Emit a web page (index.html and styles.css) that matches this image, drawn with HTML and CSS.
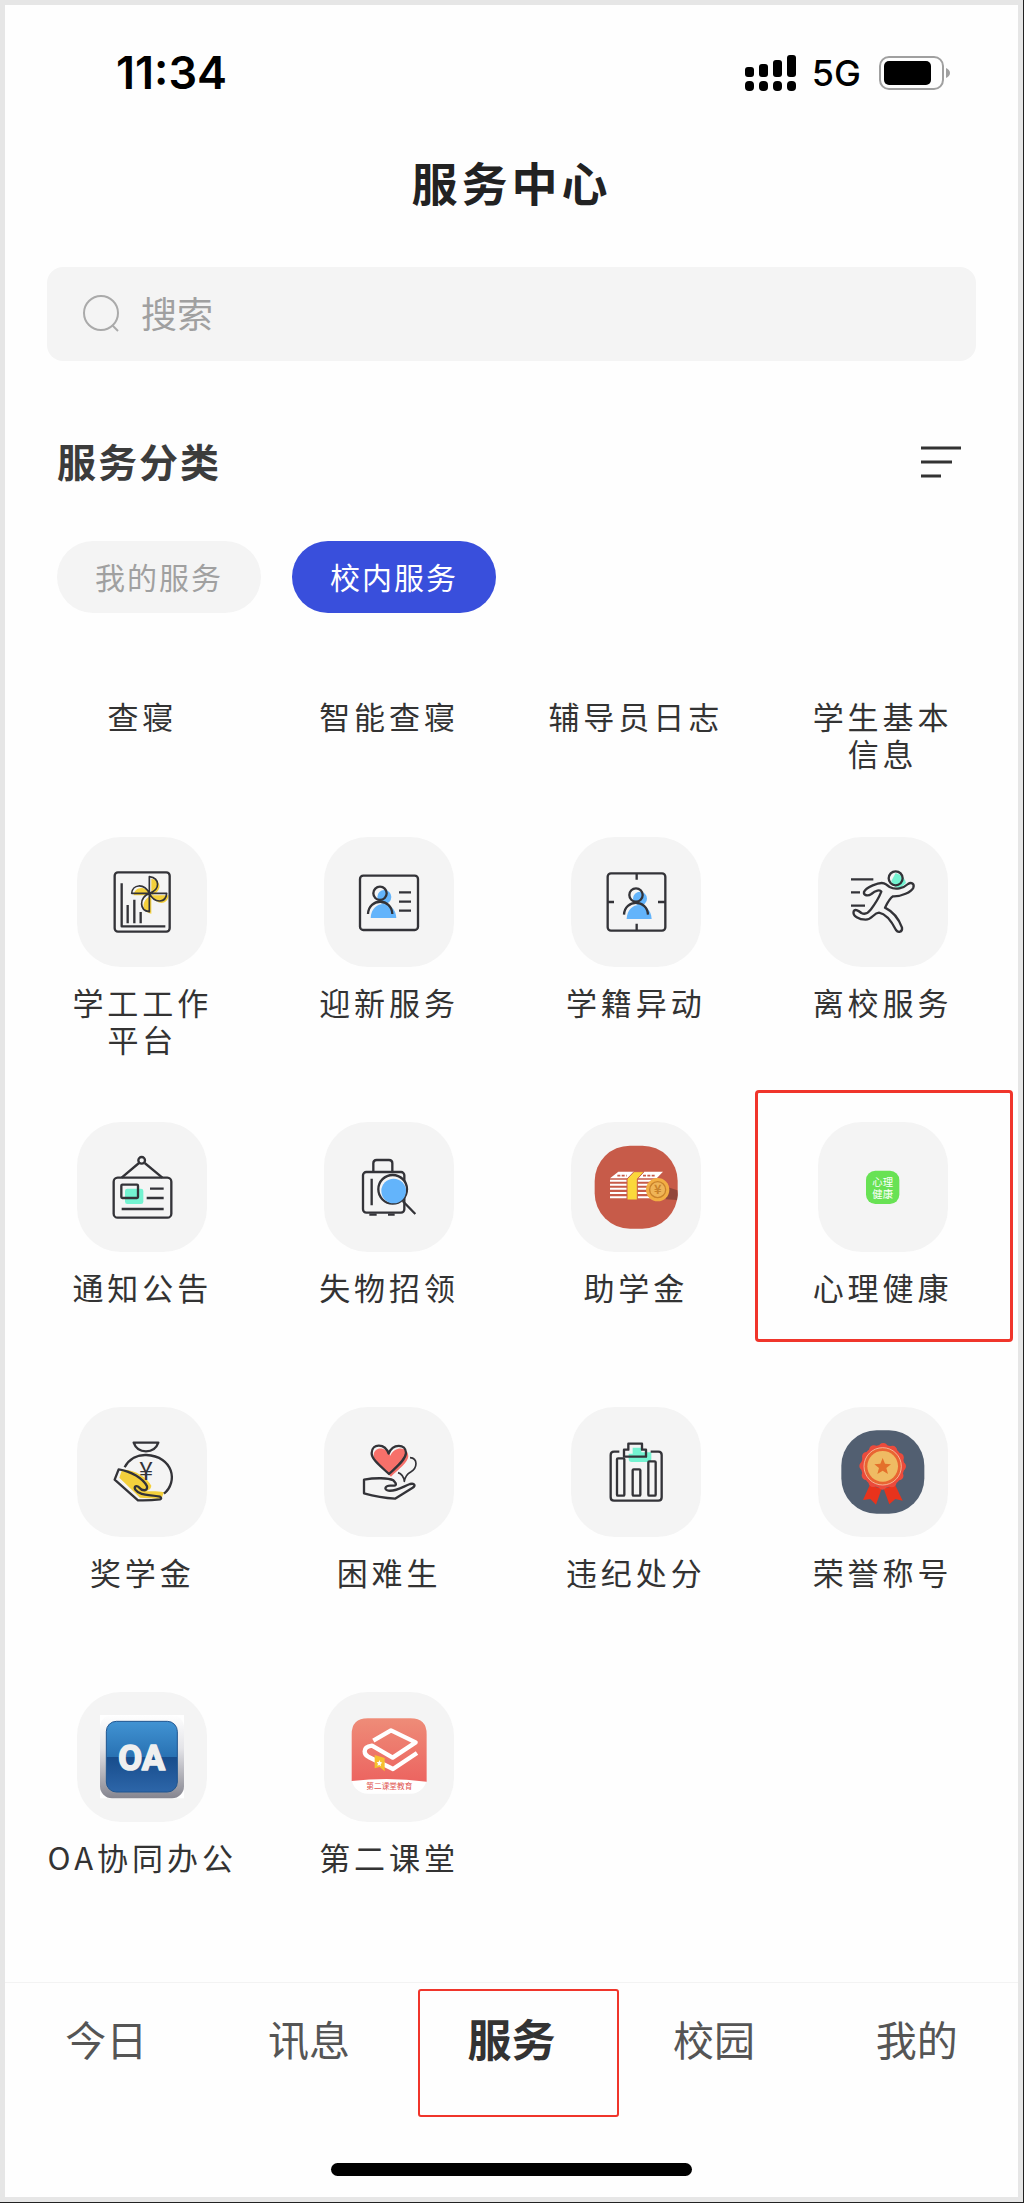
FILE: index.html
```html
<!DOCTYPE html>
<html lang="zh-CN">
<head>
  <meta charset="UTF-8">
  <meta name="viewport" content="width=device-width, initial-scale=1.0">
  <title>服务中心</title>
  <link rel="stylesheet" href="styles.css">
</head>
<body>
  <div class="screen">
    <div class="status-bar">
      <span class="time">11:34</span>
      <div class="status-icons">
        <svg class="signal" viewBox="0 0 51 36">
          <rect x="0" y="12" width="9" height="10" rx="3"/>
          <rect x="14" y="9" width="9" height="13" rx="3"/>
          <rect x="28" y="5" width="9" height="17" rx="3"/>
          <rect x="42" y="0" width="9" height="22" rx="3"/>
          <rect x="0" y="26" width="9" height="10" rx="4"/>
          <rect x="14" y="26" width="9" height="10" rx="4"/>
          <rect x="28" y="26" width="9" height="10" rx="4"/>
          <rect x="42" y="26" width="9" height="10" rx="4"/>
        </svg>
        <span class="network">5G</span>
        <svg class="battery" viewBox="0 0 72 34">
          <rect x="1" y="1" width="63" height="32" rx="9" fill="none" stroke="#a0a0a0" stroke-width="2"/>
          <rect x="5" y="5" width="47" height="24" rx="5"/>
          <path d="M67 12Q71 14 71 17T67 22Z" fill="#a0a0a0"/>
        </svg>
      </div>
    </div>

    <h1>服务中心</h1>

    <label class="search">
      <svg viewBox="0 0 40 40">
        <circle cx="19" cy="19" r="17"/>
        <path d="M30 31l6 6"/>
      </svg>
      <input type="text" placeholder="搜索" aria-label="搜索">
    </label>

    <div class="section-head">
      <h2>服务分类</h2>
      <button class="menu-btn" type="button" aria-label="分类">
        <svg viewBox="0 0 40 32">
          <path d="M0 2h40M0 16h31M0 30h20"/>
        </svg>
      </button>
    </div>

    <div class="pills">
      <button class="pill" type="button">我的服务</button>
      <button class="pill active" type="button">校内服务</button>
    </div>

    <div class="services">
      <a class="service" href="#">查寝</a>
      <a class="service" href="#">智能查寝</a>
      <a class="service" href="#">辅导员日志</a>
      <a class="service" href="#">学生基本<br>信息</a>

      <a class="service" href="#">
        <svg class="tile" viewBox="51 48 390 390">
          <path class="yellow" d="M274 223V173C306 178 308 211 274 223H326C324 251 291 256 274 223V278C244 274 242 238 274 223H221C223 196 258 191 274 223Z"/>
          <rect x="164" y="154" width="165" height="178" rx="10"/>
          <path d="M185 187V316H316M203 252V307M223 236V307M242 273V307"/>
          <path class="thin" d="M268 217V167C300 172 302 205 268 217H320C318 245 285 250 268 217V272C238 268 236 232 268 217H215C217 190 252 185 268 217Z"/>
        </svg>
        学工工作<br>平台
      </a>
      <a class="service" href="#">
        <svg class="tile" viewBox="792 48 390 390">
          <circle class="blue" cx="973" cy="228" r="21"/>
          <path class="blue" d="M932 291C934 235 1006 235 1009 291Z"/>
          <rect x="900" y="164" width="174" height="163" rx="10"/>
          <circle cx="960" cy="217" r="20"/>
          <path d="M924 279C926 230 995 230 997 279M1017 214H1053M1017 242H1053M1017 269H1053"/>
        </svg>
        迎新服务
      </a>
      <a class="service" href="#">
        <svg class="tile" viewBox="61 48 390 390">
          <circle class="blue" cx="268" cy="233" r="21"/>
          <path class="blue" d="M228 294C230 238 300 238 303 294Z"/>
          <rect x="171" y="157" width="173" height="172" rx="10"/>
          <circle cx="256" cy="222" r="20"/>
          <path d="M220 281C222 234 290 234 292 281M258 157V176M258 308V329M171 243H190M322 243H344"/>
        </svg>
        学籍异动
      </a>
      <a class="service" href="#">
        <svg class="tile" viewBox="802 48 390 390">
          <path class="mint" d="M1035 156Q1062 165 1066 186L1048 202Q1025 200 1022 180Z"/>
          <circle cx="1035" cy="172" r="21"/>
          <path d="M901 175H968M901 214H928M901 254H943"/>
          <path d="M1017 198C1035 208 1058 202 1072 189C1082 182 1092 189 1088 200C1082 213 1052 227 1027 226C1020 230 1008 250 1003 260C1027 272 1045 295 1054 320C1056 334 1042 336 1036 327C1022 300 1005 278 985 275C968 276 965 296 945 296C925 296 905 285 909 271C913 262 925 270 932 276C942 281 952 277 960 266C974 248 984 232 992 212C988 205 975 208 962 219C952 226 938 224 940 213C945 200 985 182 1000 187C1008 190 1012 195 1017 198Z"/>
        </svg>
        离校服务
      </a>

      <a class="service" href="#">
        <svg class="tile" viewBox="51 63 390 390">
          <rect class="mint" x="195" y="263" width="55" height="46" rx="7"/>
          <circle cx="245" cy="178" r="10"/>
          <path d="M237 186L185 230M254 186L307 230"/>
          <rect x="161" y="230" width="173" height="120" rx="12"/>
          <rect x="184" y="251" width="50" height="40" rx="3"/>
          <path d="M270 263H311M260 291H311M185 324H311"/>
        </svg>
        通知公告
      </a>
      <a class="service" href="#">
        <svg class="tile" viewBox="792 63 390 390">
          <path d="M940 212V187Q940 177 950 177H987Q997 177 997 187V212"/>
          <rect x="909" y="213" width="124" height="122" rx="10"/>
          <path d="M935 233V313M928 341H950M984 341H1004M1028 300L1066 339"/>
          <circle class="lens" cx="998" cy="265" r="43"/>
          <circle class="blue" cx="1001" cy="270" r="37"/>
        </svg>
        失物招领
      </a>
      <a class="service" href="#">
        <svg class="tile solid" viewBox="61 123 390 390">
          <rect x="132" y="194" width="249" height="249" rx="106" fill="#c75b49"/>
          <path d="M345 355L379 357Q383 340 380 328L350 318Z" fill="#92463b"/>
          <path d="M178 292L203 272H337L318 292Z" fill="#fff"/>
          <path d="M200 284H228M277 284H314" stroke="#c75b49" stroke-width="5" stroke-dasharray="9 4"/>
          <path d="M178 299H320M178 311H320M178 323H320M178 336H320M178 349H320" stroke="#fff" stroke-width="6"/>
          <path d="M229 294L250 272H280L260 294V357H229Z" fill="#fbd83b" stroke="#c75b49" stroke-width="3"/>
          <circle cx="321" cy="326" r="35" fill="#f2ae43"/>
          <circle cx="321" cy="326" r="24" fill="#efb457" stroke="#c9822b" stroke-width="4"/>
          <text x="321" y="340" font-size="38" font-weight="700" fill="#c9822b">¥</text>
        </svg>
        助学金
      </a>
      <a class="service marked" href="#">
        <svg class="tile solid" viewBox="802 123 390 390">
          <rect x="946" y="269" width="100" height="100" rx="28" fill="#68e254"/>
          <text x="996" y="314" font-size="31" fill="#fff">心理</text>
          <text x="996" y="351" font-size="31" fill="#fff">健康</text>
        </svg>
        心理健康
      </a>

      <a class="service" href="#">
        <svg class="tile" viewBox="51 50 390 390">
          <path class="yellow" d="M186 238C225 236 262 262 274 286C272 300 262 302 250 300C262 306 290 300 312 306L304 326L240 322L178 262Z"/>
          <path d="M221 157H295Q286 183 258 183Q230 183 221 157Z"/>
          <path d="M194 231C208 203 235 193 259 194C340 198 355 275 312 310"/>
          <path d="M300 327Q270 331 234 330L164 268L176 237C212 242 250 265 261 288C264 304 246 302 238 292C230 284 220 288 226 298C240 318 270 312 300 319Q307 324 300 327Z"/>
          <text x="258" y="270" font-size="76" fill="#333338">¥</text>
        </svg>
        奖学金
      </a>
      <a class="service" href="#">
        <svg class="tile" viewBox="792 50 390 390">
          <path class="red" d="M993 259C966 234 940 213 941 195C942 168 978 168 991 196C1004 166 1044 168 1045 198C1044 216 1016 237 993 259Z"/>
          <path d="M987 251C960 226 934 206 935 188C936 158 975 158 986 190C998 158 1038 160 1038 188C1037 208 1010 229 987 251Z"/>
          <path class="thin" d="M1050 202C1074 204 1073 232 1052 245Q1036 254 1033 273Q1030 252 1014 247"/>
          <path d="M912 268C945 262 985 262 1000 270C1012 282 1010 287 995 286C975 284 970 298 985 301C1010 304 1030 288 1050 281C1065 278 1067 286 1058 292L1005 325Q960 322 912 309Z"/>
        </svg>
        困难生
      </a>
      <a class="service" href="#">
        <svg class="tile" viewBox="61 50 390 390">
          <path class="mint" d="M246 172H272V186H302V206Q302 215 293 215H243Q234 215 234 206V190H246Z"/>
          <path d="M206 184H190Q180 184 180 194V321Q180 331 190 331H323Q333 331 333 321V194Q333 184 323 184H300"/>
          <path d="M220 199V178H233V160H274V178H286V199Z"/>
          <rect x="199" y="204" width="22" height="112" rx="3"/>
          <rect x="246" y="237" width="23" height="79" rx="3"/>
          <rect x="293" y="213" width="22" height="103" rx="3"/>
        </svg>
        违纪处分
      </a>
      <a class="service" href="#">
        <svg class="tile solid" viewBox="802 50 390 390">
          <rect x="872" y="120" width="249" height="250" rx="106" fill="#525f71"/>
          <path d="M957 285L937 329L959 326L976 343L993 295ZM1034 285L1056 331L1034 326L1016 342L999 295Z" fill="#e8331c"/>
          <circle cx="996" cy="228" r="65" fill="#eb4b3c"/>
          <circle cx="996" cy="228" r="56" fill="none" stroke="#eb4b3c" stroke-width="28" stroke-linecap="round" stroke-dasharray="0 29.32"/>
          <circle cx="996" cy="228" r="56" fill="#e96432" stroke="#fbe3c4" stroke-width="2"/>
          <circle cx="996" cy="228" r="46" fill="#efbb63"/>
          <path d="M996 203L1003 220L1021 222L1007 233L1012 251L996 241L980 251L985 233L971 222L989 220Z" fill="#e4702b"/>
        </svg>
        荣誉称号
      </a>

      <a class="service" href="#">
        <svg class="tile solid" viewBox="141 68 390 390">
          <defs>
            <linearGradient id="silver" x1="0" y1="0" x2="0" y2="1">
              <stop offset="0" stop-color="#fff"/>
              <stop offset="0.4" stop-color="#e4e4e8"/>
              <stop offset="1" stop-color="#85858f"/>
            </linearGradient>
            <linearGradient id="gloss" x1="0" y1="0" x2="0" y2="1">
              <stop offset="0" stop-color="#4193d3"/>
              <stop offset="0.5" stop-color="#2972b3"/>
              <stop offset="0.5" stop-color="#174c8b"/>
              <stop offset="1" stop-color="#2d66a9"/>
            </linearGradient>
          </defs>
          <rect x="210" y="137" width="252" height="250" fill="#fff"/>
          <rect x="210" y="137" width="252" height="250" rx="36" fill="url(#silver)"/>
          <rect x="229" y="156" width="213" height="212" rx="30" fill="url(#gloss)" stroke="#1f5590" stroke-width="3"/>
          <text class="oa" x="335" y="301" font-size="104">OA</text>
        </svg>
        OA协同办公
      </a>
      <a class="service" href="#">
        <svg class="tile solid" viewBox="882 68 390 390">
          <defs>
            <linearGradient id="coral" x1="0" y1="0" x2="0" y2="1">
              <stop offset="0" stop-color="#ee8c78"/>
              <stop offset="1" stop-color="#ec6460"/>
            </linearGradient>
          </defs>
          <rect x="965" y="147" width="225" height="226" rx="48" fill="#fff"/>
          <path d="M965 335V195Q965 147 1013 147H1142Q1190 147 1190 195V337Q1078 322 965 335Z" fill="url(#coral)"/>
          <path d="M1030 214L1083 183L1157 219L1088 265L1026 229Q1004 232 1004 246Q1004 258 1016 263L1089 299L1161 251" fill="none" stroke="#fff" stroke-width="13"/>
          <path d="M1034 257L1064 266V306L1049 293L1034 297Z" fill="#f6bf2f"/>
          <path d="M1048 272L1051 278L1057 280L1052 284L1053 291L1048 287L1042 289L1044 283L1040 278L1046 278Z" fill="#fff"/>
          <text x="1078" y="360" font-size="23" fill="#e0524f">第二课堂教育</text>
        </svg>
        第二课堂
      </a>
    </div>

    <div class="bottom">
      <nav class="tabs">
        <a href="#">今日</a>
        <a href="#">讯息</a>
        <a class="active" href="#">服务</a>
        <a href="#">校园</a>
        <a href="#">我的</a>
      </nav>
      <div class="home-indicator"></div>
    </div>
  </div>
</body>
</html>
```
FILE: styles.css
```css
*, *::after {
  box-sizing: border-box;
}
body {
  margin: 0;
  border-right: 1px solid #222;
  border-bottom: 1px solid #222;
  background-color: #fefefe;
  font-family: "Noto Sans CJK SC", sans-serif;
  color: #333;
}
a {
  color: inherit;
  text-decoration: none;
}
button {
  border: 0;
  background: none;
  font-family: inherit;
  cursor: pointer;
}

.screen {
  display: flex;
  flex-direction: column;
  min-height: calc(100vh - 1px);
  border: 5px solid #e6e6e6;
}

/* status bar */
.status-bar {
  display: flex;
  align-items: center;
  justify-content: space-between;
  height: 135px;
  padding: 0 67px 0 111px;
  font-family: Inter, sans-serif;
  color: #000;
}
.time {
  font-size: 45px;
  font-weight: 600;
}
.status-icons {
  display: flex;
  align-items: center;
}
.signal {
  width: 51px;
  height: 36px;
}
.network {
  margin: 0 18px 0 16px;
  font-size: 36px;
  font-weight: 500;
}
.battery {
  width: 72px;
  height: 34px;
}

h1 {
  margin: 0;
  padding-bottom: 6px;
  font-size: 46px;
  font-weight: 700;
  line-height: 82px;
  letter-spacing: 4px;
  text-align: center;
  color: #222;
}

/* search */
.search {
  display: flex;
  align-items: center;
  gap: 19px;
  height: 94px;
  margin: 39px 42px 0;
  padding: 0 35px;
  border-radius: 16px;
  background-color: #f4f4f4;
}
.search svg {
  width: 40px;
  height: 40px;
  fill: none;
  stroke: #aaa;
  stroke-width: 2;
}
.search input {
  flex: 1;
  min-width: 0;
  padding: 0 0 4px;
  border: 0;
  outline: 0;
  background: none;
  font-family: inherit;
  font-size: 36px;
}
.search input::placeholder {
  color: #a0a0a0;
}

/* categories */
.section-head {
  display: flex;
  align-items: center;
  justify-content: space-between;
  margin: 71px 57px 0 52px;
}
h2 {
  margin: 0;
  padding-bottom: 4px;
  font-size: 39px;
  font-weight: 700;
  line-height: 56px;
  letter-spacing: 2px;
  color: #3c3c3c;
}
.menu-btn {
  padding: 0;
}
.menu-btn svg {
  display: block;
  width: 40px;
  height: 32px;
  stroke: #333;
  stroke-width: 3;
}
.pills {
  display: flex;
  gap: 31px;
  margin: 49px 52px 0;
}
.pill {
  height: 72px;
  padding: 0 38px 2px;
  border-radius: 36px;
  background-color: #f4f4f4;
  color: #a0a0a0;
  font-size: 30px;
  letter-spacing: 2px;
}
.pill.active {
  background-color: #394fdc;
  color: #fff;
}

/* services */
.services {
  display: grid;
  grid-template-columns: repeat(4, 1fr);
  grid-template-rows: 140px;
  grid-auto-rows: 285px;
  margin: 84px 12px 0 14px;
}
.service {
  position: relative;
  font-size: 31px;
  line-height: 37px;
  letter-spacing: 4px;
  text-align: center;
}
.tile {
  display: block;
  width: 130px;
  height: 130px;
  margin: 0 auto 16px;
  border-radius: 44px;
  background-color: #f4f4f4;
  fill: none;
  stroke: #333338;
  stroke-width: 7;
  stroke-linejoin: round;
}
.tile .thin {
  stroke-width: 5;
}
.tile .yellow {
  fill: #f4d03c;
  stroke: none;
}
.tile .blue {
  fill: #63b4fb;
  stroke: none;
}
.tile .mint {
  fill: #74f3d1;
  stroke: none;
}
.tile .red {
  fill: #f7706a;
  stroke: none;
}
.tile .lens {
  fill: #f4f4f4;
}
.tile.solid {
  stroke: none;
}
.tile text {
  stroke: none;
  letter-spacing: 0;
  text-anchor: middle;
}
.tile .oa {
  fill: #efefef;
  stroke: #efefef;
  stroke-width: 5;
  font-family: Roboto, sans-serif;
  font-weight: 700;
}
.marked::after {
  content: "";
  position: absolute;
  top: -32px;
  left: -4px;
  right: -7px;
  height: 252px;
  border: 3px solid #f0352b;
  border-radius: 4px;
}

/* tab bar */
.bottom {
  margin-top: auto;
  padding-bottom: 21px;
  border-top: 1px solid #f3f3f3;
}
.tabs {
  display: grid;
  grid-template-columns: repeat(5, 1fr);
}
.tabs a {
  position: relative;
  font-size: 41px;
  line-height: 111px;
  text-align: center;
  color: #555;
}
.tabs .active {
  font-size: 44px;
  font-weight: 700;
  color: #333;
}
.tabs .active::after {
  content: "";
  position: absolute;
  top: 6px;
  left: 8px;
  right: -6px;
  height: 128px;
  border: 2px solid #f0352b;
  border-radius: 3px;
}
.home-indicator {
  width: 361px;
  height: 13px;
  margin: 69px auto 0;
  border-radius: 7px;
  background-color: #000;
}
```
